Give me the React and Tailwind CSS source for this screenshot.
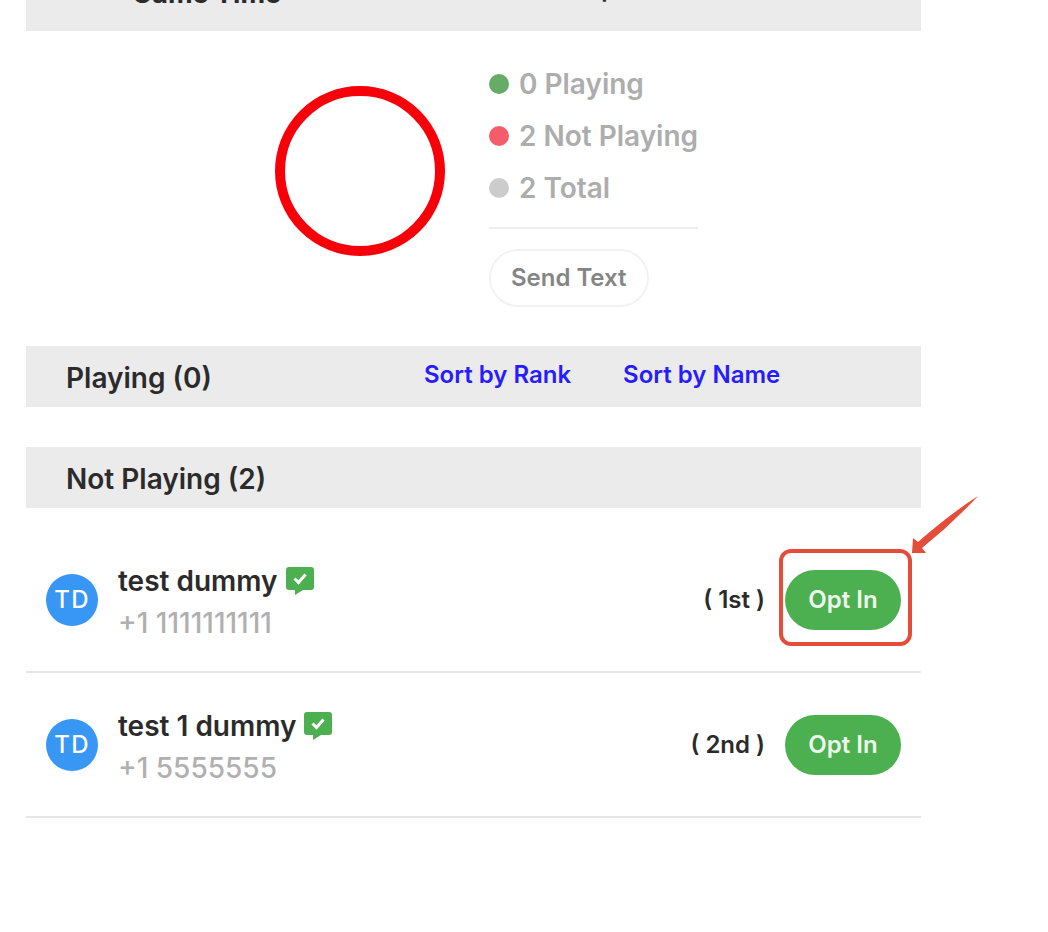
const players = [
  { name: 'test dummy', phone: '+1 1111111111', rank: '1st', highlighted: true },
  { name: 'test 1 dummy', phone: '+1 5555555', rank: '2nd' },
]

const stats = [
  { label: '0 Playing', dot: 'bg-[#66ab66]' },
  { label: '2 Not Playing', dot: 'bg-[#f65d6b]' },
  { label: '2 Total', dot: 'bg-[#cccccc]' },
]

export default function App(){
  return (
    <div className="min-h-screen overflow-hidden bg-white pl-[26px] pr-[127px] font-['Inter',sans-serif] text-[#2b2b2b]">
      <header className="flex h-[31px] items-end bg-[#ebebeb] pl-[106px]">
        <h1 className="mb-[21px] w-[438px] text-[27px] leading-8 font-bold">Game Time</h1>
        <p className="mb-[26px] text-2xl leading-8 font-semibold">12 pm</p>
      </header>
      <main>
        <Summary />
        <SectionBar title="Playing (0)">
          <div className="flex gap-[52px] pb-1 text-2xl leading-8 font-semibold text-[#261cff]">
            <button>Sort by Rank</button>
            <button>Sort by Name</button>
          </div>
        </SectionBar>
        <div className="h-10" />
        <SectionBar title="Not Playing (2)" />
        <ul className="pt-5">
          {players.map(p => <PlayerRow key={p.name} {...p} />)}
        </ul>
      </main>
    </div>
  )
}

function Summary(){
  return (
    <section className="flex justify-center gap-11 pt-[27px] pr-5 pb-[39px] pl-[46px]">
      <div className="mt-7 size-[170px] rounded-full border-[10px] border-[#f8000a]" />
      <div>
        <ul className="border-b-2 border-[#eeeeee] pb-[13px] text-[28px] leading-[52px] font-semibold text-[#adadad]">
          {stats.map(s => (
            <li key={s.label} className="flex items-center gap-2.5">
              <span className={`size-5 rounded-full ${s.dot}`} />
              {s.label}
            </li>
          ))}
        </ul>
        <button className="mt-5 h-[58px] rounded-full border-2 border-[#f1f3f3] px-5 text-2xl font-semibold text-[#858585]">Send Text</button>
      </div>
    </section>
  )
}

function SectionBar({title, children}){
  return (
    <div className="flex h-[61px] items-center bg-[#ebebeb] pl-10">
      <h2 className="w-[358px] pt-0.5 text-[28px] leading-8 font-semibold">{title}</h2>
      {children}
    </div>
  )
}

function PlayerRow({name, phone, rank, highlighted}){
  return (
    <li className="flex h-[145px] items-center border-b-2 border-[#e6e6e6] px-5">
      <span className="flex size-[52px] items-center justify-center rounded-full bg-[#3896f5] text-2xl font-medium tracking-wider text-white">TD</span>
      <div className="ml-5 pt-1 text-[28px] leading-[42px]">
        <div className="flex items-center gap-2">
          <span className="font-semibold">{name}</span>
          <VerifiedIcon />
        </div>
        <div className="font-medium text-[#b0b0b0]">{phone}</div>
      </div>
      <span className="mr-5 ml-auto text-2xl font-semibold">( {rank} )</span>
      <div className="relative">
        <button className="h-[60px] w-[116px] rounded-full bg-[#4caf50] text-2xl font-semibold text-[#eef8ee]">Opt In</button>
        {highlighted && <Callout />}
      </div>
    </li>
  )
}

function VerifiedIcon(){
  return (
    <svg className="h-7 w-7" viewBox="0 0 28 28" aria-hidden="true">
      <path fill="#4caf50" d="M3 0h22a3 3 0 0 1 3 3v17a3 3 0 0 1-3 3h-8l-8 5v-5H3a3 3 0 0 1-3-3V3a3 3 0 0 1 3-3z" />
      <path fill="none" stroke="#fff" strokeWidth="3" d="M8.500 11.500l4 4 7-8" />
    </svg>
  )
}

function Callout(){
  return (
    <div className="pointer-events-none absolute -top-[21px] -left-1.5 h-[97px] w-[133px] rounded-xl border-4 border-[#e44d3a]">
      <svg className="absolute -top-[57px] left-[129px] h-[58px] w-[67px]" viewBox="0 0 67 58" aria-hidden="true">
        <path fill="#e44d3a" d="M66 0Q38 18 6 46L1 42L0 57L14 57L10 52Q40 28 66 0z" />
      </svg>
    </div>
  )
}
